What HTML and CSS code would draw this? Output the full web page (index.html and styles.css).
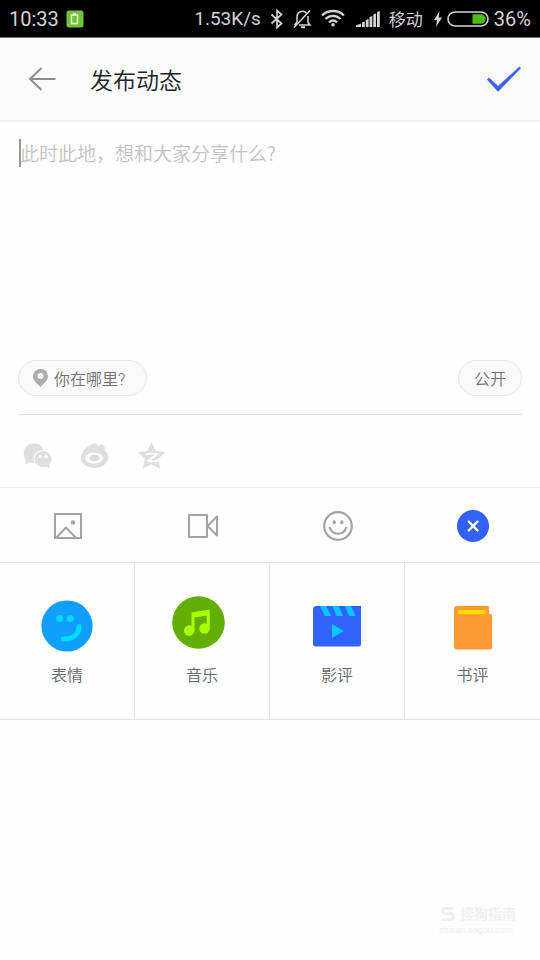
FILE: index.html
```html
<!DOCTYPE html>
<html lang="zh-CN">
<head>
<meta charset="utf-8">
<meta name="viewport" content="width=device-width, initial-scale=1">
<title>发布动态</title>
<link rel="stylesheet" href="styles.css">
</head>
<body>
<div class="status">
  <div class="status-left">
    <span>10:33</span>
    <svg width="18" height="18" viewBox="0 0 18 18" aria-hidden="true"><rect width="17" height="17" x=".5" y=".5" rx="2.5" fill="#6fc63c"/><path d="M5.500 5h6v8.500h-6zM7 4h3" fill="none" stroke="#f4ffec" stroke-width="1.300"/></svg>
  </div>
  <div class="status-right">
    <span class="rate">1.53K/s</span>
    <svg class="bluetooth" width="14" height="20" viewBox="0 0 14 20" fill="none" stroke="#d4d4d4" stroke-width="1.700" aria-hidden="true"><path d="M1.500 5.500l10 9L7 18.500v-17l4.500 4-10 9"/></svg>
    <svg class="bell" width="20" height="20" viewBox="0 0 20 20" fill="none" stroke="#d4d4d4" stroke-width="1.500" aria-hidden="true"><path d="M4 13V8a5.500 5.500 0 0 1 9.500-4M15 7v6.500l2 2.500H6M1 18.500L17 1.500M1.500 16L4 13"/><path d="M8 18.200h4" stroke-width="2"/></svg>
    <svg class="wifi" width="24" height="18" viewBox="0 0 24 18" fill="none" stroke="#d4d4d4" stroke-width="2.300" aria-hidden="true"><path d="M1 5.500c6-6 16-6 22 0M4.500 9c4.500-4.200 10.500-4.200 15 0M8 12.300c2.500-2.200 5.500-2.200 8 0"/><circle cx="12" cy="14.800" r="1.800" fill="#d4d4d4" stroke="none"/></svg>
    <svg class="signal" width="24" height="16" viewBox="0 0 24 16" fill="#d4d4d4" aria-hidden="true"><path d="M0 16v-1.500l5-2V16zM6 16v-4.500l2.800-1V16zM9.800 16V9l2.800-1v8zM13.500 16V6l2.800-1v11zM17.300 16V3.500l2.700-1V16zM21 16V1l2.800-1v16z"/></svg>
    <span class="carrier">移动</span>
    <svg class="bolt" width="10" height="16" viewBox="0 0 10 16" fill="#d4d4d4" aria-hidden="true"><path d="M6.500 0L1 9h3L3 16l6-9.500H5.700z"/></svg>
    <svg class="battery" width="42" height="16" viewBox="0 0 42 16" aria-hidden="true"><rect x="1" y="1" width="40" height="14" rx="7" fill="none" stroke="#d4d4d4" stroke-width="1.600"/><path d="M25.500 3.300H34a4.700 4.700 0 0 1 0 9.400h-8.500z" fill="#49bd10"/></svg>
    <span>36%</span>
  </div>
</div>

<header class="header">
  <button class="icon-button" type="button" aria-label="返回"><svg width="28" height="24" viewBox="0 0 28 24" fill="none" stroke="#8d8d8d" stroke-width="2" aria-hidden="true"><path d="M27.500 12H2M13.500 1L2 12l11.500 11"/></svg></button>
  <h1>发布动态</h1>
  <button class="icon-button" type="button" aria-label="发布"><svg width="36" height="26" viewBox="0 0 36 26" aria-hidden="true"><path d="M1 13.500l2-2 9 8.500L33.500.5l1.500 1.700L12 25.800z" fill="#3b63f3"/></svg></button>
</header>

<main>
  <section class="compose">
    <div class="editor"><textarea aria-label="动态内容" placeholder="此时此地，想和大家分享什么?"></textarea></div>
    <div class="options">
      <button class="pill" type="button"><svg width="15" height="18" viewBox="0 0 15 18" aria-hidden="true"><path fill="#adadad" fill-rule="evenodd" d="M7.500 0A7.300 7.300 0 0 1 15 7.300C15 12 10.500 14.500 7.500 18 4.500 14.500 0 12 0 7.300A7.300 7.300 0 0 1 7.500 0zm0 4a3 3 0 1 0 0 6 3 3 0 0 0 0-6z"/></svg>你在哪里?</button>
      <button class="pill" type="button">公开</button>
    </div>
  </section>

  <div class="share">
    <button class="icon-button" type="button" aria-label="微信"><svg width="28" height="28" viewBox="0 0 28 28" aria-hidden="true"><path fill="#dedede" d="M10 1.500c5 0 8.500 2.500 9.500 6.500-6 .2-10 4-10 9 0 1.500.3 2.700.8 3.800-1.700.2-3.300 0-4.800-.6L1.300 22.500l1-4.500C-2.500 13-.5 1.500 10 1.500z"/><path fill="#dedede" fill-rule="evenodd" d="M19 9.300c4.800 0 8.400 3.400 8.400 7.700 0 2.300-1 4-2.500 5.500l1 3.500-3.800-1.300c-6 1.500-11.500-2-11.500-7.700 0-4.300 3.700-7.700 8.400-7.700zM16.200 13a1.600 1.600 0 1 0 0 3.200 1.600 1.600 0 0 0 0-3.200zm5.800 0a1.600 1.600 0 1 0 0 3.200 1.600 1.600 0 0 0 0-3.200z"/></svg></button>
    <button class="icon-button" type="button" aria-label="微博"><svg width="28" height="28" viewBox="0 0 28 28" aria-hidden="true"><path fill="#dedede" d="M0 16.500C-.5 10 7 3 13 1.500c2.500-.5 4 .5 3.500 3C20 .5 25.500 4 23.500 8.500c2.500 1.500 3.700 4 3.700 6.500C27 22 20.500 26 13.500 26S.5 22.500 0 16.500z"/><ellipse cx="13" cy="16" rx="9" ry="5.500" fill="#fefefe"/><ellipse cx="13.500" cy="16" rx="5" ry="3.600" fill="#dedede"/></svg></button>
    <button class="icon-button" type="button" aria-label="QQ空间"><svg width="28" height="28" viewBox="0 0 28 28" aria-hidden="true"><path fill="#dedede" d="M13.500.5l4.200 8.500 9.500 1.200-7 6.600 2 9.900-8.700-4.500-8.700 4.500 2-9.900-7-6.600L9.300 9z"/><path d="M8 12.200c4-1 8-.9 11 0l-8.500 6.500c3 .8 7 .8 10.500-.2" fill="none" stroke="#fefefe" stroke-width="2"/></svg></button>
  </div>

  <div class="tools">
    <button class="icon-button" type="button" aria-label="图片"><svg width="28" height="26" viewBox="0 0 28 26" fill="none" stroke="#a3a3a3" stroke-width="2" stroke-linejoin="round" aria-hidden="true"><rect x="1" y="1" width="26" height="24"/><path d="M2 25l10-10.500L22 25"/><circle cx="19" cy="9.500" r="2.300" fill="#a3a3a3" stroke="none"/></svg></button>
    <button class="icon-button" type="button" aria-label="视频"><svg width="30" height="26" viewBox="0 0 30 26" fill="none" stroke="#a3a3a3" stroke-width="2" stroke-linejoin="round" aria-hidden="true"><path d="M1 2h18v22H1zM29 3.500v19L19.500 13z"/></svg></button>
    <button class="icon-button" type="button" aria-label="表情符号"><svg width="30" height="30" viewBox="0 0 30 30" fill="none" stroke="#a3a3a3" stroke-width="2.200" aria-hidden="true"><circle cx="15" cy="15" r="13.800"/><path d="M6.500 16c2.800 9 14.200 9 17 0"/><ellipse cx="11.300" cy="11.200" rx="1.700" ry="2" fill="#a3a3a3" stroke="none"/><ellipse cx="18.800" cy="11.200" rx="1.700" ry="2" fill="#a3a3a3" stroke="none"/></svg></button>
    <button class="icon-button" type="button" aria-label="关闭"><svg width="32" height="32" viewBox="0 0 32 32" aria-hidden="true"><circle cx="16" cy="16" r="16" fill="#3161fb"/><path d="M11.700 11.700l8.800 8.800M20.500 11.700l-8.800 8.800" stroke="#fff" stroke-width="2.400" stroke-linecap="round"/></svg></button>
  </div>

  <div class="cards">
    <button class="card" type="button"><svg width="54" height="54" viewBox="0 0 54 54" aria-hidden="true"><circle cx="27" cy="28" r="25.600" fill="#119fff"/><circle cx="19.800" cy="20.500" r="3.500" fill="#00dcff"/><circle cx="30.300" cy="20.500" r="3.500" fill="#00dcff"/><path d="M39 28.500c0 7.500-5.500 12.500-15.500 12.500" fill="none" stroke="#00dcff" stroke-width="5" stroke-linecap="round"/></svg>表情</button>
    <button class="card" type="button"><svg width="54" height="54" viewBox="0 0 54 54" aria-hidden="true"><circle cx="23.500" cy="24.500" r="26.300" fill="#62ae02"/><path fill="#aaff00" d="M16.500 14.500L34.700 11.500V31h-3V17.500l-12.200 2V33h-3z"/><circle cx="14.200" cy="32.500" r="5.200" fill="#aaff00"/><circle cx="29.500" cy="30.500" r="5.200" fill="#aaff00"/></svg>音乐</button>
    <button class="card" type="button"><svg width="54" height="54" viewBox="0 0 54 54" aria-hidden="true"><path d="M6.500 8H51v38a2.500 2.500 0 0 1-2.500 2.500h-43A2.500 2.500 0 0 1 3 46V11.500A3.500 3.500 0 0 1 6.500 8z" fill="#3162fc"/><path fill="#07c5ff" d="M10 8h6.300l5 10h-6.500zM22.300 8h6.300l4.500 10h-6.500zM34.500 8h6.300l5 10h-6.500zM22 26l12 7-12 7z"/></svg>影评</button>
    <button class="card" type="button"><svg width="54" height="54" viewBox="0 0 54 54" aria-hidden="true"><path d="M11 8h30.500A1.500 1.500 0 0 1 43 9.500V16h1.500a1.500 1.500 0 0 1 1.500 1.500v32.500a1.500 1.500 0 0 1-1.500 1.500H11a3 3 0 0 1-3-3V11a3 3 0 0 1 3-3z" fill="#ff9933"/><rect x="12" y="12" width="27.500" height="4.300" rx="1.500" fill="#ffe000"/></svg>书评</button>
  </div>
</main>

<footer class="watermark">
  <svg width="18" height="18" viewBox="0 0 18 18" fill="none" stroke="#eee" stroke-width="2.500" aria-hidden="true"><path d="M14 3.500H7c-5 0-5 5 0 5h4c5 0 5 6 0 6H3"/></svg>
  <strong>搜狗指南</strong>
  <small>zhinan.sogou.com</small>
</footer>
</body>
</html>
```

FILE: styles.css
```css
* { box-sizing: border-box; }
body {
  margin: 0;
  min-height: 100vh;
  display: flex;
  flex-direction: column;
  background: #fefefe;
  font-family: Roboto, "Noto Sans CJK SC", sans-serif;
  font-size: 16px;
  color: #777;
}
svg { display: block; flex: none; overflow: visible; }
button { font: inherit; color: inherit; cursor: pointer; }
.icon-button { border: 0; padding: 0; background: none; }

.status {
  height: 38px;
  padding: 0 9px;
  display: flex;
  justify-content: space-between;
  align-items: center;
  background: #000;
  border-bottom: 1px solid #777;
  color: #d4d4d4;
  font-size: 20px;
  line-height: 36px;
}
.status-left, .status-right { display: flex; align-items: center; }
.status-left { gap: 7px; }
.rate { font-size: 19px; }
.bluetooth { margin-left: 9px; }
.bell { margin-left: 9px; }
.wifi { margin-left: 8px; }
.signal { margin-left: 11px; }
.carrier { margin-left: 9px; padding-top: 2px; font-size: 17px; }
.bolt { margin-left: 10px; }
.battery { margin: 0 5px 0 4px; }

.header {
  height: 84px;
  padding: 0 18px 0 28px;
  display: flex;
  align-items: center;
  background: #fafafa;
  border-bottom: 2px solid #f3f3f3;
}
.header h1 {
  flex: 1;
  margin: 0 0 0 34px;
  padding-top: 6px;
  font-size: 23px;
  line-height: 34px;
  font-weight: 350;
  color: #222;
}

.compose { margin: 0 18px; padding-bottom: 18px; border-bottom: 1px solid #ddd; }
.editor { height: 221px; margin-top: 17px; display: flex; }
.editor::before { content: ""; width: 2px; height: 28px; margin-left: 1px; background: #999; }
textarea {
  flex: 1;
  margin-left: -1px;
  border: 0;
  padding: 0;
  resize: none;
  outline: 0;
  background: none;
  font: 350 19px/28px "Noto Sans CJK SC", sans-serif;
  color: #555;
}
textarea::placeholder { color: #c2c2c2; opacity: 1; }
.options { display: flex; justify-content: space-between; }
.pill {
  height: 36px;
  padding: 0 15px;
  display: flex;
  align-items: center;
  gap: 6px;
  border: 1px solid #e6e6e6;
  border-radius: 18px;
  background: #fafafa;
  color: #707070;
  font-weight: 350;
}
.pill:first-child { padding: 0 21px 0 14px; }

.share { height: 73px; padding: 10px 24px 0; display: flex; align-items: center; gap: 29px; border-bottom: 1px solid #ebebeb; }

.tools { height: 74px; display: grid; grid-template-columns: repeat(4, 1fr); }
.tools .icon-button { display: flex; justify-content: center; align-items: center; padding-top: 2px; }

.cards { display: grid; grid-template-columns: repeat(4, 1fr); border: solid #e6e6e6; border-width: 1px 0; }
.card {
  height: 156px;
  padding: 4px 0 0;
  display: flex;
  flex-direction: column;
  align-items: center;
  justify-content: center;
  gap: 12px;
  border: 0;
  border-right: 1px solid #e6e6e6;
  background: none;
  color: #636870;
  font-weight: 350;
  line-height: 24px;
}
.card:last-child { border-right: 0; }

.watermark {
  margin: auto 24px 24px auto;
  display: grid;
  grid-template-columns: 18px auto;
  column-gap: 3px;
  align-items: center;
  color: #f0f0f0;
}
.watermark strong { font-size: 14px; line-height: 20px; }
.watermark small { grid-column: 1 / -1; font-size: 9px; line-height: 12px; }
```
